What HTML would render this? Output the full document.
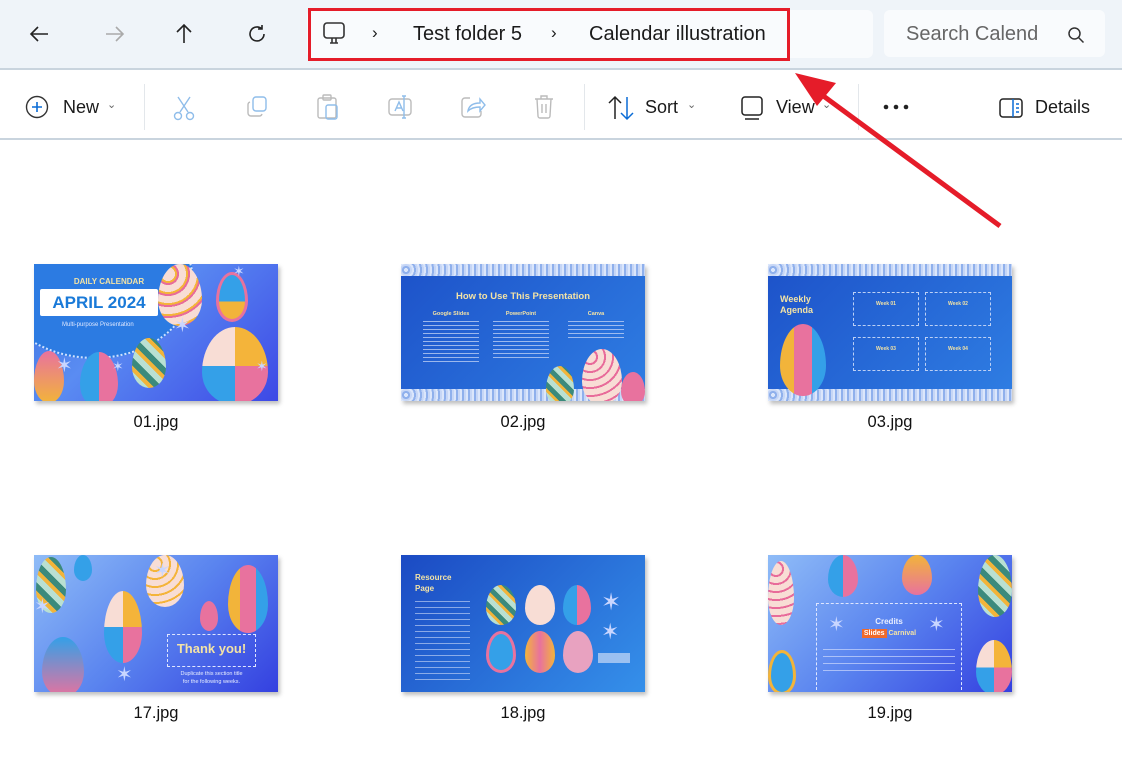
<!DOCTYPE html>
<html><head><meta charset="utf-8"><style>
*{margin:0;padding:0;box-sizing:border-box}
body{width:1122px;height:782px;position:relative;background:#fff;font-family:"Liberation Sans",sans-serif;overflow:hidden;color:#1a1a1a}
.a{position:absolute}
.top{left:0;top:0;width:1122px;height:70px;background:#eff4f9;border-bottom:2px solid #c9d4de}
.tb{left:0;top:70px;width:1122px;height:70px;background:#fff;border-bottom:2px solid #c9d4de}
.lbl{font-size:18px;color:#1a1a1a}
.th{position:absolute;width:244px;height:137px;overflow:hidden;box-shadow:2px 3px 4px rgba(0,0,0,.25)}
.cap{position:absolute;width:244px;text-align:center;font-size:16.5px;color:#111}
.egg{position:absolute;border-radius:50% 50% 50% 50%/58% 58% 42% 42%}
.st{position:absolute;color:#c9d6ff;font-size:20px;line-height:1}
.t{position:absolute;color:#f3e3a6;font-weight:bold;text-align:center}
.lace{position:absolute;left:0;width:244px;height:12px;background:repeating-radial-gradient(circle at 5px 6px,#dbe6fb 0 2px,#8fb0ec 2px 4px,#c6d6f6 4px 6px)}
</style></head><body>
<div class="a top"></div>
<svg class="a" style="left:28px;top:22px" width="24" height="24" viewBox="0 0 24 24" fill="none" stroke="#222" stroke-width="1.6"><path d="M20 12H4M10 5l-7 7 7 7"/></svg>
<svg class="a" style="left:102px;top:22px" width="24" height="24" viewBox="0 0 24 24" fill="none" stroke="#aaa" stroke-width="1.6"><path d="M4 12h16M14 5l7 7-7 7"/></svg>
<svg class="a" style="left:172px;top:22px" width="24" height="24" viewBox="0 0 24 24" fill="none" stroke="#222" stroke-width="1.6"><path d="M12 21V3M5 10l7-7 7 7"/></svg>
<svg class="a" style="left:245px;top:22px" width="24" height="24" viewBox="0 0 24 24" fill="none" stroke="#222" stroke-width="1.6"><path d="M19 12a7 7 0 1 1-2.5-5.4M17 3v4h-4"/></svg>
<div class="a" style="left:307px;top:10px;width:566px;height:48px;background:#f9fbfd;border-radius:6px"></div>
<div class="a" style="left:308px;top:8px;width:482px;height:53px;border:3px solid #e51c29"></div>
<svg class="a" style="left:321px;top:21px" width="26" height="26" viewBox="0 0 26 26" fill="none" stroke="#333" stroke-width="1.6"><rect x="3" y="2" width="20" height="15" rx="3"/><path d="M9 22h8M11 17v5M15 17v5"/></svg>
<div class="a lbl" style="left:372px;top:23px;font-size:17px">›</div>
<div class="a" style="left:413px;top:23px;font-size:20px">Test folder 5</div>
<div class="a lbl" style="left:551px;top:23px;font-size:17px">›</div>
<div class="a" style="left:589px;top:23px;font-size:20px">Calendar illustration</div>
<div class="a" style="left:884px;top:10px;width:221px;height:47px;background:#f9fbfd;border-radius:6px"></div>
<div class="a" style="left:906px;top:23px;font-size:20px;color:#666">Search Calend</div>
<svg class="a" style="left:1067px;top:26px" width="18" height="18" viewBox="0 0 18 18" fill="none" stroke="#333" stroke-width="1.5"><circle cx="7.5" cy="7.5" r="5.5"/><path d="M11.5 11.5l5 5"/></svg>
<div class="a tb"></div>
<svg class="a" style="left:25px;top:95px" width="24" height="24" viewBox="0 0 24 24" fill="none"><circle cx="12" cy="12" r="10.5" stroke="#333" stroke-width="1.4"/><path d="M12 7v10M7 12h10" stroke="#0a6cd6" stroke-width="1.6"/></svg>
<div class="a" style="left:63px;top:97px;font-size:18px">New</div>
<div class="a" style="left:107px;top:98px;font-size:11px;color:#666">⌄</div>
<div class="a" style="left:144px;top:84px;width:1px;height:46px;background:#e3e7eb"></div>
<svg class="a" style="left:172px;top:95px" width="24" height="26" viewBox="0 0 24 26" fill="none" stroke="#8fbdea" stroke-width="1.4"><path d="M6 2l10 15M18 2L8 17"/><circle cx="6" cy="21" r="3.5"/><circle cx="18" cy="21" r="3.5"/></svg>
<svg class="a" style="left:245px;top:95px" width="24" height="24" viewBox="0 0 24 24" fill="none" stroke="#bbb" stroke-width="1.4"><rect x="8" y="2" width="13" height="14" rx="3" stroke="#8fbdea"/><path d="M5 7a3 3 0 0 0-2 3v8a3 3 0 0 0 3 3h8a3 3 0 0 0 3-2"/></svg>
<svg class="a" style="left:316px;top:94px" width="24" height="26" viewBox="0 0 24 26" fill="none" stroke="#bbb" stroke-width="1.4"><rect x="2" y="4" width="18" height="20" rx="2"/><rect x="7" y="1" width="8" height="5" rx="1"/><rect x="10" y="11" width="11" height="14" rx="2" stroke="#8fbdea"/></svg>
<svg class="a" style="left:387px;top:94px" width="26" height="26" viewBox="0 0 26 26" fill="none" stroke="#bbb" stroke-width="1.4"><rect x="2" y="5" width="22" height="16" rx="3"/><path d="M8 17l4-9 4 9M9.5 14h5" stroke="#8fbdea"/><path d="M17 2v22M15 2h4M15 24h4" stroke="#8fbdea"/></svg>
<svg class="a" style="left:460px;top:95px" width="26" height="24" viewBox="0 0 26 24" fill="none" stroke="#bbb" stroke-width="1.4"><path d="M10 3H5a3 3 0 0 0-3 3v13a3 3 0 0 0 3 3h13a3 3 0 0 0 3-3v-3"/><path d="M8 16c1-6 6-8 12-8V4l5 6-5 6v-4c-5 0-9 1-12 4z" stroke="#8fbdea"/></svg>
<svg class="a" style="left:532px;top:94px" width="24" height="26" viewBox="0 0 24 26" fill="none" stroke="#bbb" stroke-width="1.4"><path d="M3 5h18M9 5V2h6v3M5 5l1 17a2 2 0 0 0 2 2h8a2 2 0 0 0 2-2l1-17M10 10v9M14 10v9"/></svg>
<div class="a" style="left:584px;top:84px;width:1px;height:46px;background:#e3e7eb"></div>
<svg class="a" style="left:607px;top:95px" width="28" height="26" viewBox="0 0 28 26" fill="none" stroke-width="1.5"><path d="M8 24V2M2 8l6-6 6 6" stroke="#222"/><path d="M20 2v22M14 18l6 6 6-6" stroke="#0a6cd6"/></svg>
<div class="a" style="left:645px;top:97px;font-size:18px">Sort</div>
<div class="a" style="left:687px;top:98px;font-size:11px;color:#666">⌄</div>
<svg class="a" style="left:740px;top:95px" width="24" height="26" viewBox="0 0 24 26" fill="none" stroke="#222" stroke-width="1.5"><rect x="2" y="2" width="20" height="18" rx="3"/><path d="M5 24h14"/></svg>
<div class="a" style="left:776px;top:97px;font-size:18px">View</div>
<div class="a" style="left:822px;top:98px;font-size:11px;color:#666">⌄</div>
<div class="a" style="left:858px;top:84px;width:1px;height:46px;background:#e3e7eb"></div>
<svg class="a" style="left:882px;top:103px" width="30" height="8"><circle cx="4" cy="4" r="2.3" fill="#222"/><circle cx="14" cy="4" r="2.3" fill="#222"/><circle cx="24" cy="4" r="2.3" fill="#222"/></svg>
<svg class="a" style="left:998px;top:97px" width="26" height="22" viewBox="0 0 26 22" fill="none" stroke-width="1.5"><rect x="2" y="2" width="22" height="18" rx="3" stroke="#222"/><path d="M15 2v18M18 7h3M18 11h3M18 15h3" stroke="#0a6cd6"/></svg>
<div class="a" style="left:1035px;top:97px;font-size:18px">Details</div>

<div class="th" style="left:34px;top:264px;background:linear-gradient(135deg,#3a72e0,#5a8cf2 40%,#3d48e6)">
 <div class="a" style="left:-40px;top:-60px;width:200px;height:155px;border-radius:50%;background:#2c7be2;border:2px dotted #cfe0ff"></div>
 <div class="t" style="left:30px;top:13px;width:90px;font-size:8px">DAILY CALENDAR</div>
 <div class="a" style="left:6px;top:25px;width:118px;height:27px;background:#fff;border-radius:2px;color:#1a7ad8;font-weight:bold;font-size:17px;text-align:center;line-height:27px">APRIL 2024</div>
 <div class="a" style="left:28px;top:58px;font-size:6px;color:#e0e8ff">Multi-purpose Presentation</div>
 <div class="egg" style="left:124px;top:0;width:44px;height:62px;background:repeating-radial-gradient(circle at 10px 10px,#f8ddd5 0 7px,#f4b43a 7px 9px,#e86b9a 9px 11px)"></div>
 <div class="egg" style="left:182px;top:8px;width:32px;height:50px;background:linear-gradient(#34a0e8 0 60%,#f2b43a 60%);border:3px solid #e8729e"></div>
 <div class="egg" style="left:168px;top:63px;width:66px;height:78px;background:conic-gradient(#f4b43a 0 25%,#e8729e 0 50%,#34a0e8 0 75%,#f8ddd5 0)"></div>
 <div class="egg" style="left:98px;top:74px;width:34px;height:50px;background:repeating-linear-gradient(45deg,#3b8a7c 0 6px,#b9e0d2 6px 12px,#f2b43a 12px 16px)"></div>
 <div class="egg" style="left:46px;top:88px;width:38px;height:56px;background:linear-gradient(90deg,#34a0e8 50%,#e8729e 50%)"></div>
 <div class="egg" style="left:0;top:87px;width:30px;height:52px;background:linear-gradient(#e8729e,#f2b43a)"></div>
 <div class="st" style="left:140px;top:52px">✶</div><div class="st" style="left:22px;top:92px">✶</div><div class="st" style="left:78px;top:95px;font-size:14px">✶</div><div class="st" style="left:222px;top:95px;font-size:14px">✶</div><div class="st" style="left:199px;top:0;font-size:14px">✶</div>
</div>
<div class="cap" style="left:34px;top:413px">01.jpg</div>

<div class="th" style="left:401px;top:264px;background:linear-gradient(135deg,#1d52c9,#2f7ee3)">
 <div class="lace" style="top:0"></div>
 <div class="lace" style="top:125px"></div>
 <div class="t" style="left:0;top:27px;width:244px;font-size:9.5px">How to Use This Presentation</div>
 <div class="t" style="left:20px;top:47px;width:60px;font-size:5.5px">Google Slides</div>
 <div class="t" style="left:90px;top:47px;width:60px;font-size:5.5px">PowerPoint</div>
 <div class="t" style="left:165px;top:47px;width:60px;font-size:5.5px">Canva</div>
 <div class="a" style="left:22px;top:57px;width:56px;height:44px;background:repeating-linear-gradient(#cfdcf8 0 1px,transparent 1px 4px);opacity:.7"></div>
 <div class="a" style="left:92px;top:57px;width:56px;height:40px;background:repeating-linear-gradient(#cfdcf8 0 1px,transparent 1px 4px);opacity:.7"></div>
 <div class="a" style="left:167px;top:57px;width:56px;height:18px;background:repeating-linear-gradient(#cfdcf8 0 1px,transparent 1px 4px);opacity:.7"></div>
 <div class="egg" style="left:181px;top:85px;width:40px;height:56px;background:repeating-radial-gradient(circle at 8px 8px,#f8ddd5 0 6px,#e86b9a 6px 8px)"></div>
 <div class="egg" style="left:145px;top:102px;width:28px;height:40px;background:repeating-linear-gradient(45deg,#3b8a7c 0 5px,#b9e0d2 5px 10px,#f2b43a 10px 13px)"></div>
 <div class="egg" style="left:220px;top:108px;width:24px;height:34px;background:#e8729e"></div>
</div>
<div class="cap" style="left:401px;top:413px">02.jpg</div>

<div class="th" style="left:768px;top:264px;background:linear-gradient(135deg,#1d52c9,#2f7ee3)">
 <div class="lace" style="top:0"></div>
 <div class="lace" style="top:125px"></div>
 <div class="t" style="left:12px;top:30px;width:60px;font-size:9px;text-align:left;line-height:11px">Weekly<br>Agenda</div>
 <div class="egg" style="left:12px;top:60px;width:46px;height:72px;background:linear-gradient(90deg,#f2b43a 0 30%,#e8729e 30% 70%,#34a0e8 70%)"></div>
 <div class="a" style="left:85px;top:28px;width:66px;height:34px;border:1px dashed #bcd0f5"></div>
 <div class="a" style="left:157px;top:28px;width:66px;height:34px;border:1px dashed #bcd0f5"></div>
 <div class="a" style="left:85px;top:73px;width:66px;height:34px;border:1px dashed #bcd0f5"></div>
 <div class="a" style="left:157px;top:73px;width:66px;height:34px;border:1px dashed #bcd0f5"></div>
 <div class="t" style="left:85px;top:37px;width:66px;font-size:5px">Week 01</div><div class="t" style="left:157px;top:37px;width:66px;font-size:5px">Week 02</div>
 <div class="t" style="left:85px;top:82px;width:66px;font-size:5px">Week 03</div><div class="t" style="left:157px;top:82px;width:66px;font-size:5px">Week 04</div>
</div>
<div class="cap" style="left:768px;top:413px">03.jpg</div>

<div class="th" style="left:34px;top:555px;background:linear-gradient(135deg,#8fbcf7,#5a84ef 50%,#3440e0)">
 <div class="egg" style="left:2px;top:2px;width:30px;height:56px;background:repeating-linear-gradient(45deg,#3b8a7c 0 6px,#b9e0d2 6px 12px,#f2b43a 12px 16px)"></div>
 <div class="egg" style="left:112px;top:0;width:38px;height:52px;background:repeating-radial-gradient(circle at 9px 9px,#f8ddd5 0 6px,#f4b43a 6px 8px)"></div>
 <div class="egg" style="left:70px;top:36px;width:38px;height:72px;background:conic-gradient(#f4b43a 0 25%,#e8729e 0 50%,#34a0e8 0 75%,#f8ddd5 0)"></div>
 <div class="egg" style="left:194px;top:10px;width:40px;height:68px;background:linear-gradient(90deg,#f2b43a 0 30%,#e8729e 30% 70%,#34a0e8 70%)"></div>
 <div class="egg" style="left:8px;top:82px;width:42px;height:60px;background:linear-gradient(#34a0e8,#e8729e)"></div>
 <div class="egg" style="left:166px;top:46px;width:18px;height:30px;background:#e8729e"></div>
 <div class="egg" style="left:40px;top:0;width:18px;height:26px;background:#34a0e8"></div>
 <div class="a" style="left:133px;top:79px;width:89px;height:33px;border:1px dashed #dfe6ff"></div>
 <div class="t" style="left:133px;top:86px;width:89px;font-size:13px">Thank you!</div>
 <div class="a" style="left:120px;top:115px;width:115px;text-align:center;font-size:5.5px;color:#e8eeff;line-height:8px">Duplicate this section title<br>for the following weeks.</div>
 <div class="st" style="left:120px;top:6px">✶</div><div class="st" style="left:82px;top:110px">✶</div><div class="st" style="left:0;top:42px">✶</div>
</div>
<div class="cap" style="left:34px;top:704px">17.jpg</div>

<div class="th" style="left:401px;top:555px;background:linear-gradient(135deg,#1b4ac3,#3590ea)">
 <div class="t" style="left:14px;top:17px;width:60px;font-size:8px;text-align:left;line-height:11px">Resource<br>Page</div>
 <div class="a" style="left:14px;top:46px;width:55px;height:82px;background:repeating-linear-gradient(#cfdcf8 0 1px,transparent 1px 6px);opacity:.6"></div>
 <div class="egg" style="left:85px;top:30px;width:30px;height:40px;background:repeating-linear-gradient(45deg,#3b8a7c 0 5px,#b9e0d2 5px 10px,#f2b43a 10px 13px)"></div>
 <div class="egg" style="left:124px;top:30px;width:30px;height:40px;background:#f8ddd5"></div>
 <div class="egg" style="left:162px;top:30px;width:28px;height:40px;background:linear-gradient(90deg,#34a0e8 50%,#e8729e 50%)"></div>
 <div class="egg" style="left:85px;top:76px;width:30px;height:42px;background:#34a0e8;border:3px solid #e8729e"></div>
 <div class="egg" style="left:124px;top:76px;width:30px;height:42px;background:linear-gradient(90deg,#f2b43a,#e8729e,#f2b43a)"></div>
 <div class="egg" style="left:162px;top:76px;width:30px;height:42px;background:#e8a2c0"></div>
 <div class="st" style="left:200px;top:36px;font-size:24px">✶</div><div class="st" style="left:200px;top:66px;font-size:22px">✶</div>
 <div class="a" style="left:197px;top:98px;width:32px;height:10px;background:#c9daf7;opacity:.7"></div>
</div>
<div class="cap" style="left:401px;top:704px">18.jpg</div>

<div class="th" style="left:768px;top:555px;background:linear-gradient(135deg,#8fbcf7,#5a84ef 50%,#3440e0)">
 <div class="egg" style="left:0;top:6px;width:26px;height:64px;background:repeating-radial-gradient(circle at 8px 8px,#f8ddd5 0 6px,#e86b9a 6px 8px)"></div>
 <div class="egg" style="left:60px;top:0;width:30px;height:42px;background:linear-gradient(90deg,#34a0e8 50%,#e8729e 50%)"></div>
 <div class="egg" style="left:134px;top:0;width:30px;height:40px;background:linear-gradient(#f2b43a,#e8729e)"></div>
 <div class="egg" style="left:210px;top:0;width:34px;height:62px;background:repeating-linear-gradient(45deg,#3b8a7c 0 6px,#b9e0d2 6px 12px,#f2b43a 12px 16px)"></div>
 <div class="egg" style="left:0;top:95px;width:28px;height:45px;background:#34a0e8;border:3px solid #f2b43a"></div>
 <div class="egg" style="left:208px;top:85px;width:36px;height:55px;background:conic-gradient(#f4b43a 0 25%,#e8729e 0 50%,#34a0e8 0 75%,#f8ddd5 0)"></div>
 <div class="a" style="left:48px;top:48px;width:146px;height:92px;border:1px dashed #dfe6ff"></div>
 <div class="t" style="left:48px;top:62px;width:146px;font-size:8px;color:#e8eeff">Credits</div>
 <div class="a" style="left:72px;top:75px;width:98px;text-align:center;font-size:7px;color:#f3e3a6;font-weight:bold"><span style="background:#f06a2a;color:#fff;padding:1px 2px">Slides</span> Carnival</div>
 <div class="a" style="left:55px;top:94px;width:132px;height:26px;background:repeating-linear-gradient(#dfe6ff 0 1px,transparent 1px 7px);opacity:.6"></div>
 <div class="st" style="left:60px;top:60px">✶</div><div class="st" style="left:160px;top:60px">✶</div>
</div>
<div class="cap" style="left:768px;top:704px">19.jpg</div>

<svg class="a" style="left:0;top:0" width="1122" height="782"><line x1="1000" y1="226" x2="818" y2="92" stroke="#e51c29" stroke-width="5"/><polygon points="795,73 836,83 817,106" fill="#e51c29"/></svg>
</body></html>
